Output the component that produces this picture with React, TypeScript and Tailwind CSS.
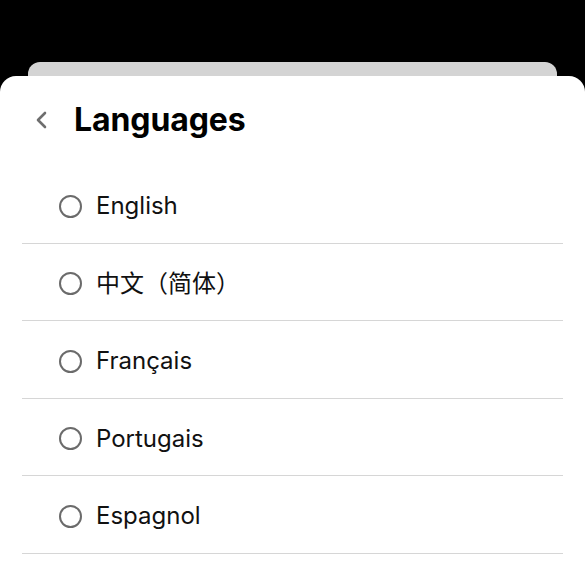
const languages = ['English', '中文（简体）', 'Français', 'Portugais', 'Espagnol']

export default function App() {
  return (
    <div
      className="h-[581px] w-[585px] overflow-hidden bg-black"
      style={{ fontFamily: 'Inter, "Noto Sans CJK SC", sans-serif' }}
    >
      <div className="pt-[62px]">
        <div className="mx-[28px] h-[30px] rounded-t-[12px] bg-[#d4d4d4]" />
        <div className="-mt-[16px] h-[520px] rounded-t-[16px] bg-white">
          <div className="flex items-center pl-[34px] pt-[24px]">
            <svg width="16" height="24" viewBox="0 0 16 24" fill="none" className="mr-[24px]">
              <path d="M11 5L4 12L11 19" stroke="#6e6e6e" strokeWidth="2.6" strokeLinecap="round" strokeLinejoin="round" />
            </svg>
            <h1 className="text-[32px] font-bold leading-[40px] tracking-[-0.1px] text-black">Languages</h1>
          </div>
          <div className="mx-[22px] mt-[26px]">
            {languages.map((lang) => (
              <div key={lang} className="flex h-[77.5px] items-center border-b border-[#d6d6d6] pl-[37px] pt-[4px]">
                <span className="mr-[14px] h-[23px] w-[23px] rounded-full border-2 border-[#6b6b6b]" />
                <span className="text-[24px] leading-none text-[#111]">{lang}</span>
              </div>
            ))}
          </div>
        </div>
      </div>
    </div>
  )
}
